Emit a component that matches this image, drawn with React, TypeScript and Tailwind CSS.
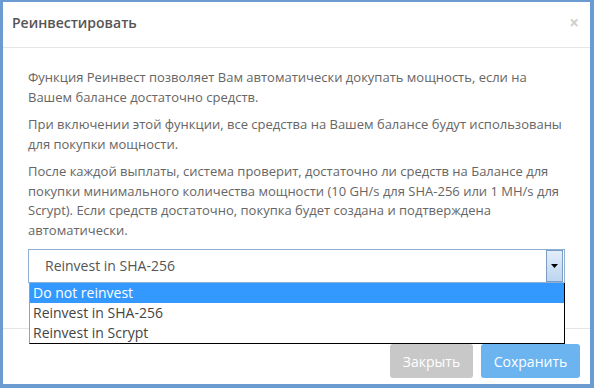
const options = ["Do not reinvest", "Reinvest in SHA-256", "Reinvest in Scrypt"];

const App = () => (
  <div
    className="flex h-[388px] w-[594px] flex-col border-b-4 border-l-[3px] border-r-4 border-t-2 border-solid border-[#6b9bd1] bg-white text-[#666]"
    style={{ fontFamily: '"Open Sans", sans-serif' }}
  >
    <div className="flex h-[46px] shrink-0 items-start justify-between border-b border-[#e5e5e5] pl-[9px] pr-[11px] pt-[11px]">
      <h4 className="text-[14px] font-semibold leading-[20px] text-[#555]">Реинвестировать</h4>
      <span className="text-[17px] font-bold leading-[20px] text-[#cfcfcf]">×</span>
    </div>

    <div className="relative px-[25px] pt-[20px] text-[13px] leading-[19.5px]">
      <p className="mb-[8px]">
        Функция Реинвест позволяет Вам автоматически докупать мощность, если на Вашем балансе
        достаточно средств.
      </p>
      <p className="mb-[8px]">
        При включении этой функции, все средства на Вашем балансе будут использованы для покупки
        мощности.
      </p>
      <p>
        После каждой выплаты, система проверит, достаточно ли средств на Балансе для покупки
        минимального количества мощности (10 GH/s для SHA-256 или 1 MH/s для Scrypt). Если
        средств достаточно, покупка будет создана и подтверждена автоматически.
      </p>

      <div className="relative mt-[9px]">
        <div className="flex h-[34px] items-center justify-between border border-[#8fb0d6] bg-white pl-[16px] pr-px text-[14px] text-[#555]">
          <span>Reinvest in SHA-256</span>
          <span className="flex h-[32px] w-[17px] items-center justify-center border border-[#7c9cc2] bg-gradient-to-b from-[#e4eefa] to-[#bcd5f0]">
            <svg width="7" height="4" viewBox="0 0 7 4">
              <path d="M0 0h7L3.5 4z" fill="#000" />
            </svg>
          </span>
        </div>

        <ul className="absolute left-px right-0 top-[34px] z-10 border-b border-l border-r border-b-black border-l-[#a0a0a0] border-r-black bg-white text-[14px] leading-[20px] text-[#444]">
          {options.map((o, i) => (
            <li
              key={o}
              className={i === 0 ? "bg-[#3399ff] pl-[3px] text-white" : "pl-[3px]"}
            >
              {o}
            </li>
          ))}
        </ul>
      </div>
    </div>

    <div className="mt-[45px] flex justify-end gap-[8px] border-t border-[#e5e5e5] pr-[10px] pt-[15px]">
      <button className="h-[34px] w-[83px] rounded-[3px] bg-[#c8c8c8] text-[14px] text-white">
        Закрыть
      </button>
      <button className="h-[34px] w-[99px] rounded-[3px] bg-[#6cb4f0] text-[14px] text-white">
        Сохранить
      </button>
    </div>
  </div>
);

export default App;
